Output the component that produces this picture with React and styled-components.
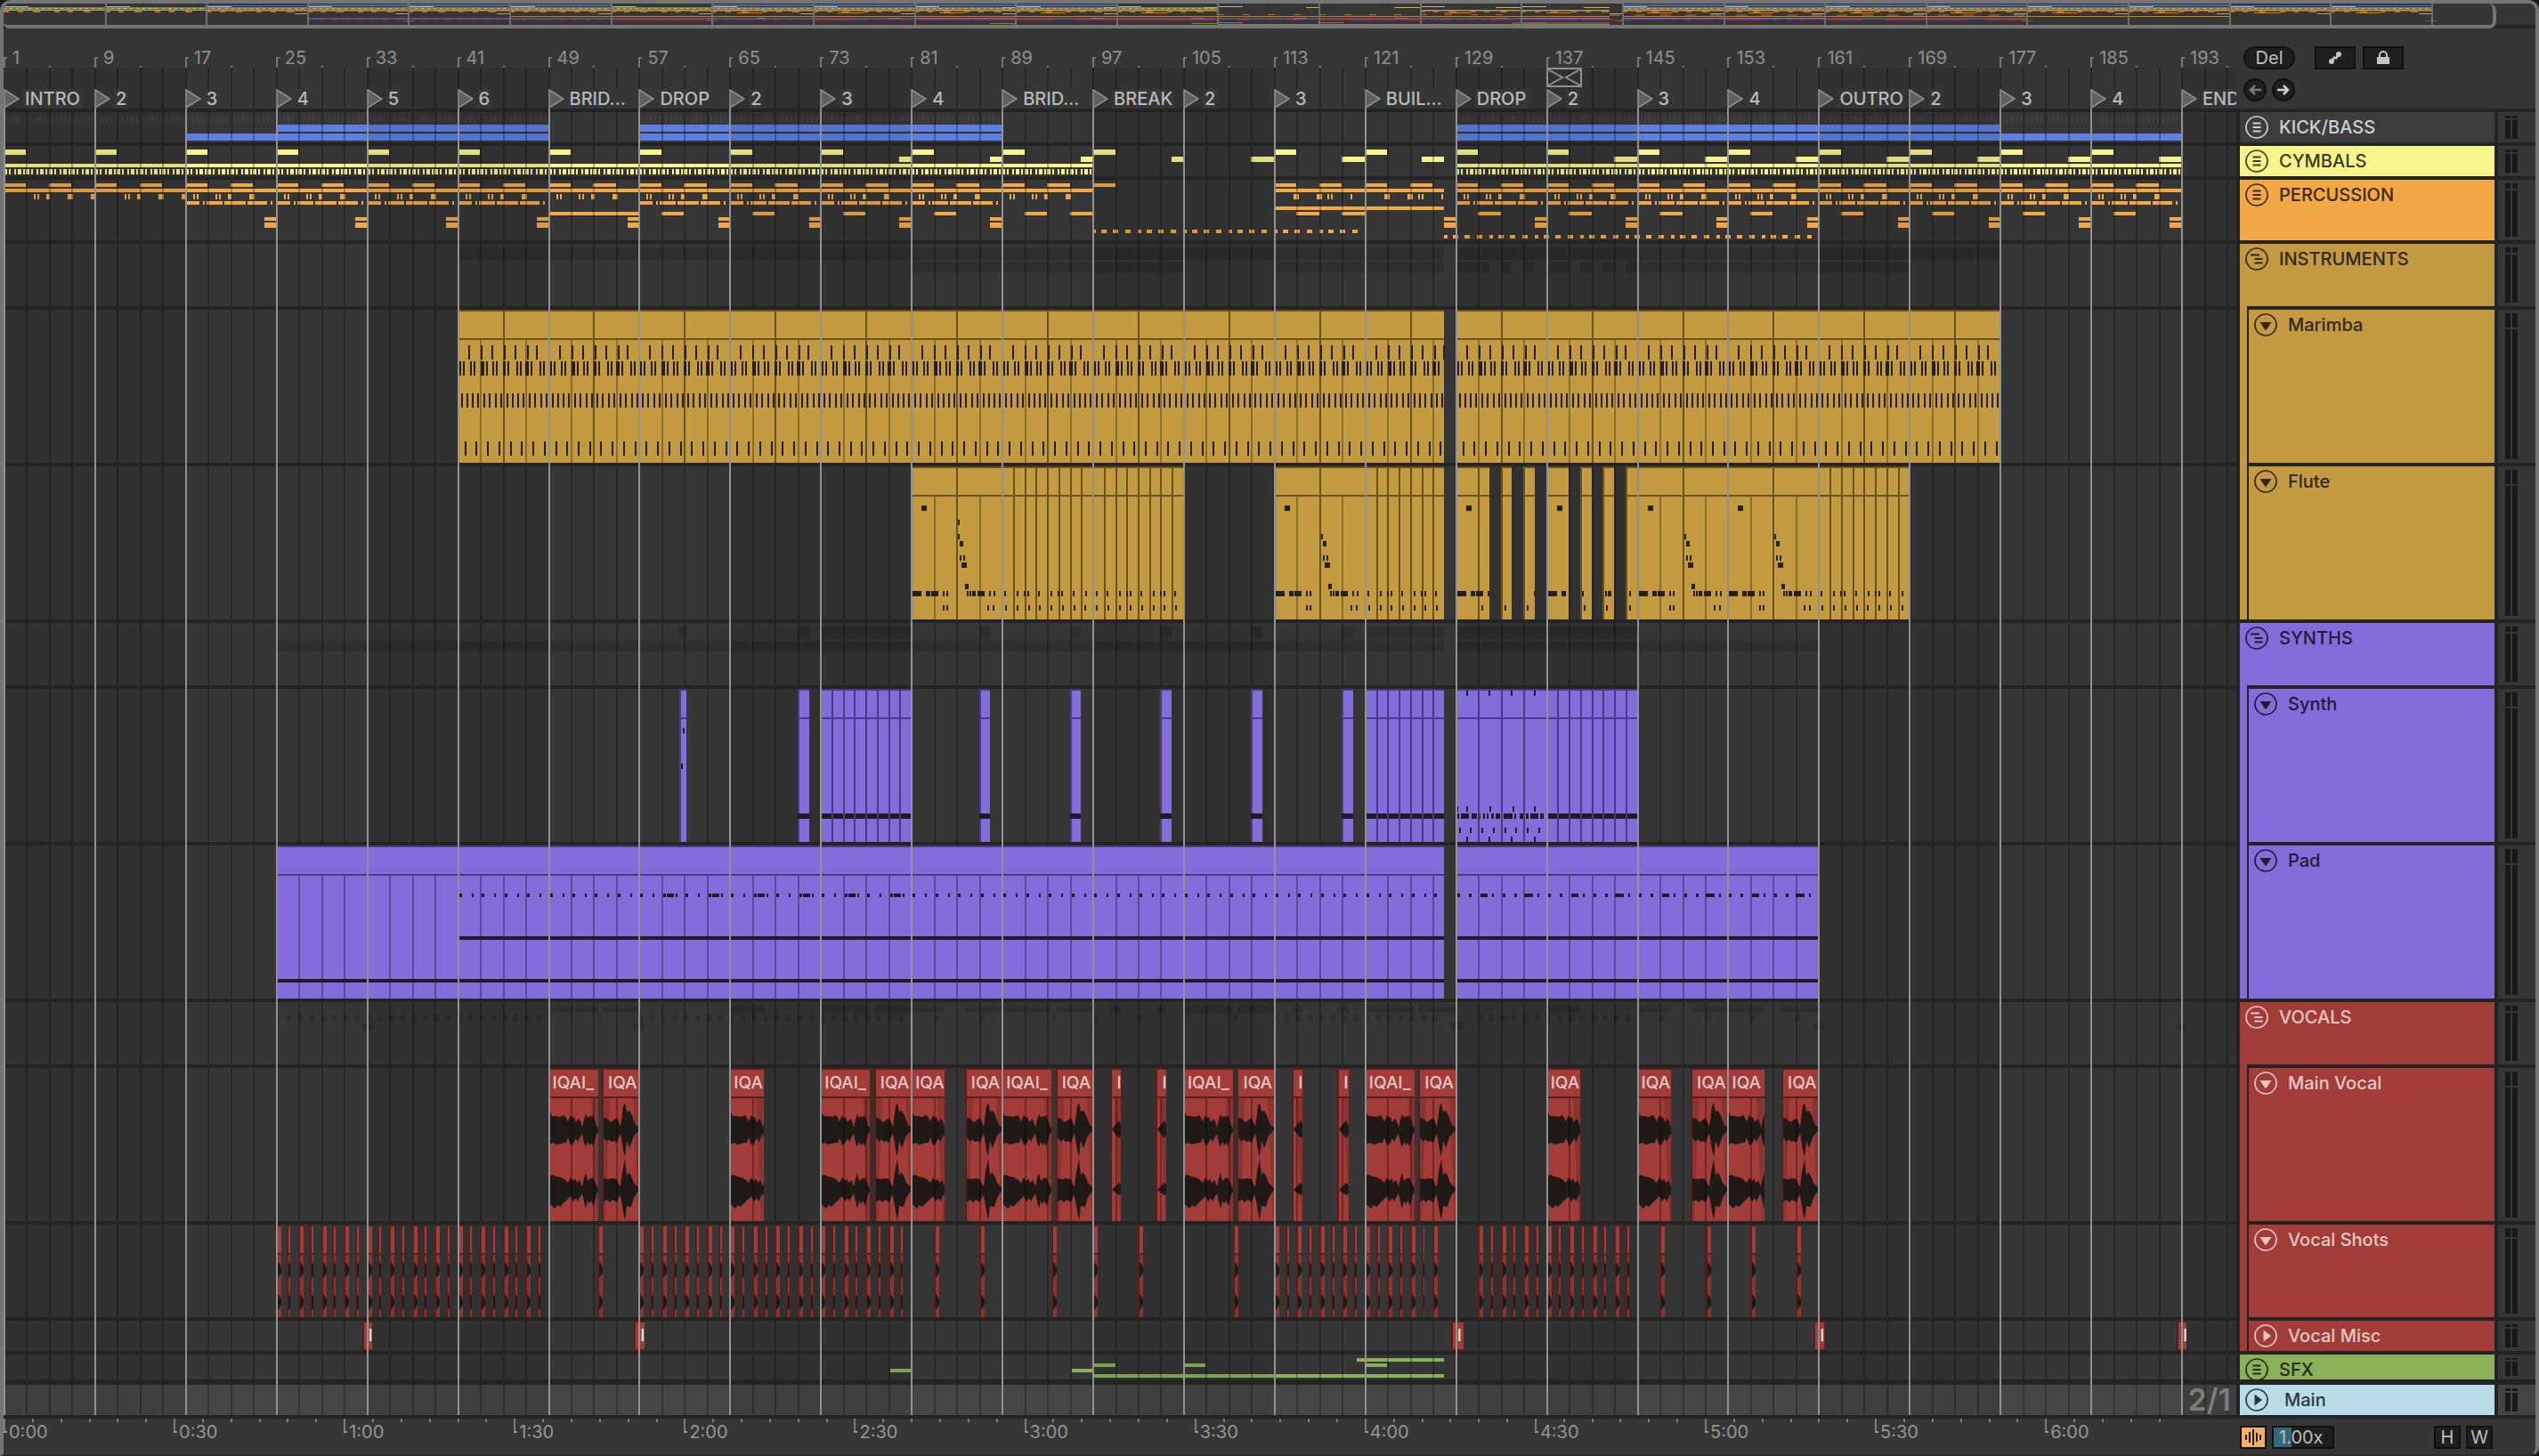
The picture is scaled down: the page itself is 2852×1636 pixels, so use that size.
import React from 'react';
import styled, { createGlobalStyle, css } from 'styled-components';

const BAR_PX = 12.74;
const BARS = 196.86;
const FONT = 'Inter, "Liberation Sans", sans-serif';

const pct = (bar) => `${(((bar - 1) / BARS) * 100).toFixed(3)}%`;
const len = (bars) => `${((bars / BARS) * 100).toFixed(3)}%`;
const at = (bar, px) => bar + px / BAR_PX;
const range = (from, to, step = 1) => {
  const out = [];
  for (let i = from; i < to; i += step) out.push(i);
  return out;
};

const color = {
  panel: '#363636',
  gap: '#242424',
  frame: '#757575',
  blue: '#5c7fe1',
  yellow: '#f7f48b',
  orange: '#f2a945',
  gold: '#c39a3f',
  purple: '#836dda',
  red: '#a13c38',
  green: '#8ab05a',
  sky: '#b8dde8',
};

const GlobalStyle = createGlobalStyle`
  * { box-sizing: border-box; }
  body {
    margin: 0;
    background: #191919;
    font-family: ${FONT};
  }
  button, input { font-family: inherit; }
`;

/* ---------- frame ---------- */

const Window = styled.main`
  min-height: 100vh;
  display: flex;
  flex-direction: column;
  background: ${color.panel};
  border: 4px solid ${color.frame};
  border-bottom: 2px solid #2c2c2c;
  border-radius: 12px 12px 10px 0;
  overflow: hidden;
  color: #b5b5b5;
  font-size: 20px;
`;

const columns = css`
  display: grid;
  grid-template-columns: minmax(0, 1fr) 290px 46px;
`;

const OverviewRow = styled.div`
  display: flex;
  height: 28px;
  background: linear-gradient(${color.panel} 24px, ${color.gap} 24px);
`;

const OverviewFrame = styled.div`
  flex: 1;
  margin-right: 44px;
  background: ${color.panel};
  border-right: 4px solid ${color.frame};
  border-bottom: 4px solid ${color.frame};
  border-radius: 0 8px 8px 6px;
`;

const Art = styled.svg`
  display: block;
  width: 100%;
  height: 100%;
  shape-rendering: crispEdges;
  font-family: ${FONT};
`;

const LayerArt = styled(Art)`
  position: absolute;
  inset: 0;
`;

const RulerRow = styled.div`
  display: grid;
  grid-template-columns: minmax(0, 1fr) 336px;
`;

const BarNumbers = styled.div`
  height: 44px;
`;

const Scrub = styled.div`
  position: relative;
  height: 46px;
  overflow: hidden;
`;

const Controls = styled.div`
  display: flex;
  flex-direction: column;
  gap: 10px;
  padding: 20px 8px 0;
`;

const ControlLine = styled.div`
  display: flex;
  gap: ${(p) => p.$gap}px;
`;

const DarkButton = styled.button`
  display: flex;
  align-items: center;
  justify-content: center;
  width: ${(p) => p.$w}px;
  height: 26px;
  padding: 0;
  margin-right: ${(p) => p.$after || 0}px;
  border: 2px solid #111;
  border-radius: ${(p) => (p.$round ? 13 : 0)}px;
  background: ${(p) => p.$bg || '#1f1f1f'};
  color: #bdbdbd;
  font-size: 20px;
  line-height: 22px;
`;

/* ---------- tracks ---------- */

const Arrangement = styled.div`
  position: relative;
`;

const TrackRow = styled.div`
  ${columns}
`;

const Lane = styled.div`
  position: relative;
  height: ${(p) => p.$h + p.$gap}px;
  border-top: ${(p) => p.$gap}px solid ${color.gap};
  background: ${(p) => (p.$light ? '#464646' : color.panel)};
  overflow: hidden;
`;

const Header = styled.div`
  display: flex;
  border-left: 4px solid ${color.gap};
  background: ${color.gap};
`;

const GroupStrip = styled.div`
  width: 8px;
  margin-right: 2px;
  background: ${(p) => p.$color};
`;

const HeaderBody = styled.div`
  flex: 1;
  display: flex;
  align-items: flex-start;
  gap: ${(p) => (p.$main ? 18 : 12)}px;
  height: ${(p) => p.$h}px;
  margin-top: ${(p) => p.$gap}px;
  padding: 4px 6px 0;
  overflow: hidden;
  background: ${(p) => p.$color};
  color: ${(p) => p.$ink};
`;

const FoldButton = styled.button`
  flex: none;
  width: 26px;
  height: 26px;
  padding: 0;
  border: 0;
  background: none;
  color: inherit;
`;

const TrackName = styled.span`
  font-weight: 500;
  line-height: 26px;
  white-space: nowrap;
`;

const MeterCell = styled.div`
  display: flex;
  gap: 2px;
  padding: 4px 20px 4px 8px;
  border-top: ${(p) => p.$gap}px solid ${color.gap};
  border-left: 4px solid ${color.gap};
  background: ${(p) => (p.$light ? '#444' : color.panel)};
`;

const Meter = styled.div`
  width: 6px;
  display: grid;
  grid-template-rows: 10% 1fr;
  gap: 2px;
`;

const MeterPart = styled.div`
  background: #191919;
`;

/* ---------- clips and locators ---------- */

const Clip = styled.div`
  position: absolute;
  top: 0;
  bottom: 0;
  overflow: hidden;
  background: ${(p) => p.$body || p.$color};
  border-top: 2px solid ${(p) => p.$edge};
  border-left: ${(p) => (p.$cut ? 2 : 0)}px solid ${(p) => p.$edge};
`;

const ClipTitle = styled.div`
  height: 32px;
  padding-left: 5px;
  overflow: hidden;
  border-bottom: 2px solid ${(p) => p.$edge};
  background: ${(p) => p.$color};
  color: #e6c8c6;
  font-size: 19px;
  font-weight: 500;
  line-height: 30px;
  white-space: nowrap;
`;

const MiscClip = styled(Clip)`
  border-bottom: 2px solid ${(p) => p.$edge};
  padding-left: 5px;
  color: #f1dedd;
  font-size: 19px;
  font-weight: 500;
  line-height: 30px;
`;

const LocatorLines = styled.div`
  position: absolute;
  top: 0;
  bottom: 0;
  left: 0;
  right: 336px;
  pointer-events: none;
`;

const Locator = styled.button`
  position: absolute;
  top: 24px;
  display: flex;
  align-items: center;
  gap: 4px;
  height: 22px;
  padding: 0;
  border: 0;
  background: none;
  color: #b9b9b9;
  font-size: 20px;
  font-weight: 500;
`;

const LocatorName = styled.span`
  padding: 0 2px;
  background: ${color.panel};
  line-height: 22px;
`;

const LoopBrace = styled.svg`
  position: absolute;
  top: 0;
  width: 40px;
  height: 22px;
`;

const Position = styled.span`
  position: absolute;
  right: 6px;
  top: 0;
  color: #7c7c7c;
  font-size: 34px;
  font-weight: 600;
  line-height: 34px;
`;

const Playhead = styled.span`
  position: absolute;
  left: 0;
  top: 0;
  bottom: 0;
  width: 2px;
  background: #8fd3e3;
`;

/* ---------- footer ---------- */

const Footer = styled.footer`
  flex: 1;
  display: grid;
  grid-template-columns: minmax(0, 1fr) 336px;
  border-top: 4px solid ${color.gap};
`;

const TimeRuler = styled.div`
  height: 40px;
`;

const FooterTools = styled.div`
  display: flex;
  gap: 6px;
  padding: 8px 48px 0 4px;
`;

const Zoom = styled.input`
  width: 70px;
  height: 26px;
  margin-right: auto;
  padding: 0 0 0 6px;
  border: 2px solid #111;
  background: linear-gradient(90deg, #31697a 20px, #1f1f1f 20px);
  color: #bdbdbd;
  font-size: 20px;
`;

/* ---------- data ---------- */

const locators = [
  [1, 'INTRO'], [9, '2'], [17, '3'], [25, '4'], [33, '5'], [41, '6'],
  [49, 'BRID...'], [57, 'DROP'], [65, '2'], [73, '3'], [81, '4'],
  [89, 'BRID...'], [97, 'BREAK'], [105, '2'], [113, '3'], [121, 'BUIL...'],
  [129, 'DROP'], [137, '2'], [145, '3'], [153, '4'], [161, 'OUTRO'],
  [169, '2'], [177, '3'], [185, '4'], [193, 'END'],
];

const bands = (y, h, spans) => spans.map(([a, b]) => ({ y, h, a, b }));
const hits = (y, h, starts, offsets) =>
  starts.flatMap((s) =>
    offsets.map(([from, to]) => ({ y, h, a: at(s, from), w: to - from }))
  );
const blocks = (from, to, size, step = 8) =>
  range(from, to, step).map((b) => [b, b + size]);

const drumRuns = [[1, 49], [57, 89], [129, 193]];
const longRuns = [[1, 97], [129, 193]];
const hatStarts = longRuns.flatMap(([a, b]) => range(a, b, 2));

const kickFaint = hits(4, 8, drumRuns.flatMap(([a, b]) => range(a, b, 4)),
  [[4, 5], [8, 10], [12, 16], [18, 20], [24, 26], [30, 32], [36, 38], [40, 44], [46, 48]]);
const kickClips = [
  ...bands(14, 8, [[25, 49], [57, 89], [129, 177]]),
  ...bands(24, 8, [[17, 49], [57, 89], [129, 193]]),
];

const cymbalClips = [
  ...bands(4, 6, [...blocks(1, 98, 2), ...blocks(113, 193, 2)]),
  ...bands(12, 6, [
    [80, 81], [88, 89], [96, 97], [104, 105], [111, 113], [119, 121], [126, 128],
    [143, 145], [151, 153], [159, 161], [167, 169], [175, 177], [183, 185], [191, 193],
  ]),
  ...bands(20, 4, longRuns),
  ...hits(26, 6, hatStarts, [[0, 4], [6, 8], [12, 14], [16, 20], [22, 24]]),
];

const fills = [...range(24, 89, 8), ...range(128, 193, 8)].map((b) => [b, b + 1]);
const shaker = [[0, 4], [10, 16], [23, 29], [37, 43]];

const percClips = [
  ...bands(4, 4, [...blocks(1, 98, 2, 4), ...blocks(113, 193, 2, 4)]),
  ...bands(10, 4, [[1, 97], [113, 128], [129, 193]]),
  ...hits(16, 6, [1, 9], [[0, 2], [34, 36], [38, 40], [48, 52], [72, 78], [98, 102]]),
  ...hits(16, 6, [...range(17, 97, 8), ...range(129, 193, 8)],
    [[9, 11], [13, 15], [34, 36], [38, 40], [48, 52], [72, 78]]),
  ...hits(16, 6, [113, 121], [[0, 2], [22, 28], [48, 54], [60, 62], [64, 66], [86, 88]]),
  ...hits(24, 4, [...range(17, 49, 8), ...range(57, 89, 8), ...range(129, 193, 8)],
    [[0, 16], [20, 22], [24, 42], [44, 68], [70, 92], [96, 98]]),
  ...bands(30, 4, [[113, 128]]),
  ...bands(36, 4, [
    [49, 57], ...blocks(59, 92, 2), [95, 97], [115, 117], [119, 121], ...blocks(131, 193, 2),
  ]),
  ...bands(42, 4, fills),
  ...bands(48, 6, fills),
  ...hits(56, 4, range(97, 119, 4), shaker),
  ...hits(62, 4, range(128, 160, 4), shaker),
  ...hits(62, 4, [160], [[0, 5]]),
];

const sfxClips = [
  ...bands(4, 4, [[120.3, 128]]),
  ...bands(10, 4, [[97, 99], [105, 107], [121, 123]]),
  ...bands(16, 4, [[79.2, 81], [95.2, 97]]),
  ...bands(22, 4, [[97, 128]]),
];

const marimbaSpans = [[41, 128], [129, 177]];
const fluteSpans = [
  [81, 105], [113, 128], [129, 132], [133, 134], [135, 136],
  [137, 139], [140, 141], [142, 143], [144, 169],
];
const synthSpans = [
  [60.6, 61.2], [71, 72], [73, 81], [87, 88], [95, 96], [103, 104],
  [111, 112], [119, 120], [121, 128], [129, 145],
];
const padSpans = [[25, 128], [129, 161]];

const inside = (spans) => (n) =>
  spans.some(([a, b]) => n.a >= a - 0.01 && n.a + (n.w || 0) / BAR_PX <= b + 0.1);

const marimbaNotes = [
  ...hits(40, 16, range(41, 177, 8),
    [12, 26, 38, 52, 64, 78, 88].map((x) => [x, x + 2])),
  ...hits(58, 16, range(41, 177, 8), [
    [2, 4], [6, 8], [14, 16], [18, 20], [26, 30], [32, 34], [39, 41], [43, 45],
    [51, 54], [56, 58], [66, 68], [70, 72], [76, 80], [82, 84], [92, 94], [96, 98],
  ]),
  ...hits(94, 16, range(41, 177, 1), [[4, 6], [10, 12]]),
  ...hits(148, 16, range(41, 177, 1), [[8, 10]]),
].filter(inside(marimbaSpans));

const fluteCascade = [85, 117, 149, 157];
const fluteNotes = [
  ...hits(44, 6, [81, 113, 129, 137, 145, 153], [[12, 18]]),
  ...hits(60, 6, [85], [[2, 4]]),
  ...hits(76, 6, fluteCascade, [[2, 4]]),
  ...hits(84, 6, fluteCascade, [[4, 8]]),
  ...hits(100, 6, fluteCascade, [[4, 6], [8, 10]]),
  ...hits(108, 6, fluteCascade, [[6, 12]]),
  ...hits(132, 6, fluteCascade, [[10, 14]]),
  ...hits(140, 6, [81, 113, 129, 137, 145, 153], [
    [1, 12], [17, 22], [23, 31], [36, 38], [40, 42], [63, 65], [66, 68],
    [69, 73], [75, 83], [88, 90], [93, 95],
  ]),
  ...hits(140, 6, [...range(89, 105, 3), ...range(121, 128, 3), ...range(161, 169, 3)],
    [[3, 5], [17, 19], [25, 27], [29, 31]]),
  ...hits(156, 6, [81, 113, 145, 153], [[36, 38], [40, 42], [86, 88], [92, 94]]),
  ...hits(156, 6, [
    ...range(89, 105), ...range(121, 128), 131, 133, 135, 140, 142, 144, ...range(161, 169),
  ], [[4, 6]]),
].filter(inside(fluteSpans));

const synthNotes = [
  ...bands(140, 6, synthSpans.slice(1, -1)),
  ...bands(140, 6, [[137, 145]]),
  ...hits(140, 6, [129], [
    [2, 4], [6, 15], [18, 24], [26, 28], [31, 33], [35, 37], [40, 43], [45, 50],
    [54, 64], [66, 68], [72, 77], [79, 82], [84, 93], [95, 99],
  ]),
  ...hits(44, 6, [60.6], [[4, 6]]),
  ...hits(84, 6, [60.6], [[2, 4]]),
  ...hits(2, 6, [129], [[12, 14], [37, 39], [62, 64], [88, 90]]),
  ...hits(132, 6, [129], [[1, 3], [12, 14], [38, 40], [64, 66], [88, 90]]),
  ...hits(156, 6, range(129, 137), [[4, 6]]),
  ...hits(166, 6, [129], [[12, 14], [37, 39], [62, 64], [88, 90]]),
];

const padNotes = [
  ...bands(102, 4, [[41, 128], [129, 161]]),
  ...bands(150, 4, padSpans),
  ...hits(54, 4, range(41, 128, 2), [[2, 5], [16, 18]]),
  ...hits(54, 4, [59, 63, 67, 71, 75, 79], [[6, 14]]),
  ...hits(54, 4, range(129, 161, 4), [[2, 5], [15, 18], [28, 36], [41, 43]]),
  ...hits(54, 4, range(133, 161, 8), [[26, 36]]),
].filter(inside(padSpans));

// kind: a = long phrase, b = answer phrase, c = breath
const vocalClips = [
  [49, 53.4, 'a', 'IQAI_'], [53.75, 57, 'b', 'IQA'], [65, 68, 'a', 'IQA'],
  [73, 77.4, 'a', 'IQAI_'], [77.75, 81, 'b', 'IQA'], [81, 84, 'a', 'IQA'],
  [85.75, 89, 'b', 'IQA'], [89, 93.4, 'a', 'IQAI_'], [93.75, 97, 'b', 'IQA'],
  [98.6, 99.5, 'c', 'I'], [102.6, 103.5, 'c', 'I'], [105, 109.4, 'a', 'IQAI_'],
  [109.75, 113, 'b', 'IQA'], [114.6, 115.5, 'c', 'I'], [118.6, 119.6, 'c', 'I'],
  [121, 125.4, 'a', 'IQAI_'], [125.75, 129, 'b', 'IQA'], [137, 140, 'a', 'IQA'],
  [145, 148, 'a', 'IQA'], [149.75, 153, 'b', 'IQA'], [153, 156.25, 'a', 'IQA'],
  [157.75, 161, 'b', 'IQA'],
];

const shots = [
  ...range(25, 49), 53.35, ...range(57, 81), 83, 87, 93.4, 97, 101, 109.4,
  ...range(113, 128), ...range(131, 145), 147, 151.1, 155, 159,
].map((b) => [b, at(b, b % 2 === 1 || b % 1 ? 6 : 4)]);

const misc = [[32.6, 33.5], [56.6, 57.5], [128.6, 129.7], [160.6, 161.5], [192.6, 193.5]];

const waves = {
  a: [
    'M0 11L2 16L4 20L8 20L13 21L18 19L20 22L22 26L25 19L27 22L29 21L31 27L34 23L36 26L38 33L40 24L42 18L44 22L46 20L48 21L50 19L52 24L54 31L56 34L56 38L54 40L52 48L50 54L48 50L46 53L44 49L42 55L40 50L38 40L36 43L33 49L31 45L28 51L25 53L22 44L20 50L17 50L14 51L9 52L6 50L3 51L0 54Z',
    'M0 81L2 87L5 86L9 88L14 89L18 91L20 93L22 95L25 89L28 93L30 90L32 95L35 92L38 99L40 90L42 84L44 93L46 91L50 89L52 93L54 98L56 101L56 105L54 108L53 112L51 121L48 115L46 119L44 115L42 124L40 116L38 107L36 110L33 116L31 112L28 116L25 110L20 115L16 119L13 122L10 120L7 124L3 120L0 119Z',
  ],
  b: [
    'M0 22L4 23L8 27L12 24L15 22L17 27L19 32L20 25L22 9L24 5L26 15L29 14L32 19L34 25L36 30L39 32L41 35L38 38L34 42L32 48L29 56L26 48L24 66L22 58L20 45L19 40L17 44L15 50L12 48L9 49L6 46L4 49L0 44Z',
    'M0 90L5 91L10 90L15 91L17 97L19 99L21 83L24 68L26 87L28 83L31 87L34 95L38 99L41 102L37 107L34 112L31 122L26 121L24 137L22 127L20 115L18 108L15 117L10 114L7 117L4 114L0 116Z',
  ],
  c: ['M0 35L4 30L8 25L10 29L12 33L12 38L10 42L8 45L4 40Z', 'M0 103L4 99L8 95L10 97L12 100L12 106L8 109L4 106Z'],
  shot: ['M0 8L3 12L5 17L3 22L0 26Z', 'M0 44L3 48L5 53L3 58L0 62Z'],
};

const edge = { gold: '#6a521f', purple: '#4a3c82', red: '#5a1f1d' };

/* ---------- drawing parts ---------- */

const zones = range(1, 197, 32);

const Grid = ({ children }) => (
  <LayerArt aria-hidden="true">
    {children}
    {zones.map((b) => (
      <rect key={b} x={pct(b)} width={len(16)} height="100%" fill="#000" opacity="0.09" />
    ))}
    {range(3, 198, 2).map((b) => (
      <rect key={b} x={pct(b)} width="2" height="100%" fill="#000" opacity="0.27" />
    ))}
  </LayerArt>
);

const Marks = ({ items, fill, opacity }) => (
  <g fill={fill} opacity={opacity}>
    {items.map((n, i) => (
      <rect key={i} x={pct(n.a)} y={n.y} width={n.w || len(n.b - n.a)} height={n.h} />
    ))}
  </g>
);

const GroupArt = ({ clips, fill, faint }) => (
  <Grid>
    {faint && <Marks items={faint} fill="#3f3f3f" />}
    {clips && <Marks items={clips} fill={fill} />}
  </Grid>
);

const Shadows = ({ items }) => (
  <LayerArt aria-hidden="true">
    <Marks items={items} fill="#000" opacity="0.14" />
  </LayerArt>
);

const Seams = ({ bars, y = 2, fill, opacity }) => (
  <g fill={fill} opacity={opacity}>
    {bars.map((b) => (
      <rect key={b} x={pct(b)} y={y} width="2" height="100%" />
    ))}
  </g>
);

const ClipBlock = ({ span, tone, cut, title, body, children }) => (
  <Clip
    $color={color[tone]}
    $body={body}
    $edge={edge[tone]}
    $cut={cut}
    style={{ left: pct(span[0]), width: len(span[1] - span[0]) }}
  >
    <ClipTitle $color={color[tone]} $edge={edge[tone]}>{title}</ClipTitle>
    {children}
  </Clip>
);

const MarimbaLane = () => (
  <>
    <Grid />
    {marimbaSpans.map((s) => <ClipBlock key={s[0]} span={s} tone="gold" />)}
    <LayerArt aria-hidden="true">
      <Seams bars={[...range(43, 128, 4), ...range(131, 177, 4)]} y={34} fill="#8b6d2d" />
      <Seams bars={[...range(45, 128, 4), ...range(133, 177, 4)]} fill={edge.gold} />
      <Marks items={marimbaNotes} fill="#241f17" />
    </LayerArt>
  </>
);

const FluteLane = () => (
  <>
    <Grid />
    {fluteSpans.map((s) => (
      <ClipBlock key={s[0]} span={s} tone="gold" cut={[133, 135, 140, 142, 144].includes(s[0])} />
    ))}
    <LayerArt aria-hidden="true">
      <Seams bars={[83, 87, 115, 119, 147, 151, 155, 159]} y={34} fill="#8b6d2d" />
      <Seams
        bars={[85, 117, 131, 145, 149, 153, 157, 161, ...range(90, 105), ...range(122, 128), ...range(162, 169)]}
        fill={edge.gold}
      />
      <Marks items={fluteNotes} fill="#241f17" />
    </LayerArt>
  </>
);

const SynthLane = () => (
  <>
    <Grid />
    {synthSpans.map((s) => (
      <ClipBlock key={s[0]} span={s} tone="purple" cut={s[1] - s[0] < 2} />
    ))}
    <LayerArt aria-hidden="true">
      <Marks items={synthNotes} fill="#1f1b26" />
      <Seams
        bars={[...range(74, 81), ...range(122, 128), 131, 133, 135, ...range(138, 145)]}
        fill={edge.purple}
      />
    </LayerArt>
  </>
);

const PadLane = () => (
  <>
    <Grid />
    {padSpans.map((s) => <ClipBlock key={s[0]} span={s} tone="purple" />)}
    <LayerArt aria-hidden="true">
      <Seams bars={[...range(27, 128, 2), ...range(131, 161, 2)]} y={34} fill="#5c4b9c" />
      <Marks items={padNotes} fill="#1f1b26" />
    </LayerArt>
  </>
);

const Wave = styled.svg`
  display: block;
  width: 60px;
  height: 138px;
  fill: #1f1918;
`;

const VocalLane = () => (
  <>
    <Grid />
    {vocalClips.map(([a, b, kind, title]) => {
      const w = Math.round((b - a) * BAR_PX);
      return (
        <ClipBlock key={a} span={[a, b]} tone="red" title={title} cut={kind !== 'a'}>
          <Wave aria-hidden="true">
            {kind === 'b' && <path d="M0 0H7L2 138H0Z" fill="#8a332f" />}
            <path d={`M${w - 8} 0H${w}V138H${w - 2}Z`} fill="#8a332f" />
            {waves[kind].map((d) => <path key={d} d={d} />)}
          </Wave>
        </ClipBlock>
      );
    })}
    <LayerArt aria-hidden="true">
      {vocalClips.flatMap(([a, b]) =>
        range(51, 162, 2)
          .filter((n) => n > a && n < b)
          .map((n) => <rect key={n} x={pct(n)} y="34" width="2" height="138" opacity="0.3" />)
      )}
    </LayerArt>
  </>
);

const ShotsLane = () => (
  <>
    <Grid />
    {shots.map((s) => (
      <ClipBlock key={s[0]} span={s} tone="red" body="#8a332f" cut>
        <Wave aria-hidden="true">
          {waves.shot.map((d) => <path key={d} d={d} />)}
        </Wave>
      </ClipBlock>
    ))}
  </>
);

const MiscLane = () => (
  <>
    <Grid />
    {misc.map(([a, b]) => (
      <MiscClip
        key={a}
        $color={color.red}
        $edge={edge.red}
        $cut
        style={{ left: pct(a), width: len(b - a) }}
      >
        I
      </MiscClip>
    ))}
  </>
);

const MainLane = () => (
  <>
    <Grid />
    <Playhead />
    <Position>2/1</Position>
  </>
);

const instrumentShadow = [...bands(4, 14, marimbaSpans), ...bands(20, 12, fluteSpans)];
const synthShadow = [...bands(4, 14, synthSpans), ...bands(20, 12, padSpans)];
const vocalShadow = [
  ...bands(4, 8, vocalClips),
  ...hits(14, 8, shots.map((s) => s[0]), [[0, 5]]),
  ...bands(24, 8, misc),
];

const tracks = [
  { name: 'KICK/BASS', h: 34, icon: 'group', bg: '#3d3d3d', ink: '#cfcfcf', art: <GroupArt clips={kickClips} faint={kickFaint} fill={color.blue} /> },
  { name: 'CYMBALS', h: 34, icon: 'group', bg: color.yellow, ink: '#3b3a22', art: <GroupArt clips={cymbalClips} fill={color.yellow} /> },
  { name: 'PERCUSSION', h: 68, icon: 'group', bg: color.orange, ink: '#3b2a12', art: <GroupArt clips={percClips} fill={color.orange} /> },
  { name: 'INSTRUMENTS', h: 70, icon: 'open', bg: color.gold, ink: '#302611', art: <><Grid /><Shadows items={instrumentShadow} /></> },
  { name: 'Marimba', h: 172, icon: 'down', child: true, bg: color.gold, ink: '#302611', art: <MarimbaLane /> },
  { name: 'Flute', h: 172, icon: 'down', child: true, bg: color.gold, ink: '#302611', art: <FluteLane /> },
  { name: 'SYNTHS', h: 70, icon: 'open', bg: color.purple, ink: '#211b38', art: <><Grid /><Shadows items={synthShadow} /></> },
  { name: 'Synth', h: 172, icon: 'down', child: true, bg: color.purple, ink: '#211b38', art: <SynthLane /> },
  { name: 'Pad', h: 172, icon: 'down', child: true, bg: color.purple, ink: '#211b38', art: <PadLane /> },
  { name: 'VOCALS', h: 70, icon: 'open', bg: color.red, ink: '#e6c8c6', art: <><Grid /><Shadows items={vocalShadow} /></> },
  { name: 'Main Vocal', h: 172, icon: 'down', child: true, bg: color.red, ink: '#e6c8c6', art: <VocalLane /> },
  { name: 'Vocal Shots', h: 104, icon: 'down', child: true, bg: color.red, ink: '#e6c8c6', art: <ShotsLane /> },
  { name: 'Vocal Misc', h: 34, icon: 'right', child: true, bg: color.red, ink: '#e6c8c6', art: <MiscLane /> },
  { name: 'SFX', h: 28, icon: 'group', bg: color.green, ink: '#232c17', art: <GroupArt clips={sfxClips} fill={color.green} /> },
  { name: 'Main', h: 34, gap: 6, icon: 'right', main: true, bg: color.sky, ink: '#2d373a', art: <MainLane /> },
];

const iconShapes = {
  group: <path d="M8.5 8.5h9M8.5 13h9M8.5 17.5h9" />,
  open: <path d="M6 8.5h10M10.5 13h9M10.5 17.5h9" />,
  down: <path d="M6.5 10h13l-6.500 9.500z" fill="currentColor" stroke="none" />,
  right: <path d="M10.5 6.5v13l8.500-6.500z" fill="currentColor" stroke="none" />,
};

const FoldIcon = ({ kind }) => (
  <svg width="26" height="26" fill="none" stroke="currentColor" strokeWidth="2" aria-hidden="true">
    <circle cx="13" cy="13" r="12" strokeWidth="1.700" />
    {iconShapes[kind]}
  </svg>
);

const Track = ({ name, h, gap = 4, icon, child, main, bg, ink, art }) => (
  <TrackRow>
    <Lane $h={h} $gap={gap} $light={main}>{art}</Lane>
    <Header>
      {child && <GroupStrip $color={bg} />}
      <HeaderBody $h={h} $gap={gap} $color={bg} $ink={ink} $main={main}>
        <FoldButton aria-label={`Fold ${name}`}><FoldIcon kind={icon} /></FoldButton>
        <TrackName>{name}</TrackName>
      </HeaderBody>
    </Header>
    <MeterCell $gap={gap} $light={main}>
      <Meter><MeterPart /><MeterPart /></Meter>
      <Meter><MeterPart /><MeterPart /></Meter>
    </MeterCell>
  </TrackRow>
);

const Overview = () => (
  <OverviewRow>
    <OverviewFrame>
      <Art aria-hidden="true">
        <Marks items={hits(0, 1, range(1, 193), [[0, 2], [5, 7]])} fill="#2b2b2b" />
        <Marks items={bands(1, 2, [[25, 49], [57, 89], [129, 177]])} fill="#4c62b4" />
        <Marks items={bands(2, 1, [[17, 25], [177, 193]])} fill="#4c62b4" />
        <Marks items={bands(3, 1, [...blocks(1, 98, 2), ...blocks(113, 193, 2)])} fill="#b8b679" />
        <Marks items={bands(4, 3, longRuns)} fill="#7f7c46" />
        <Marks items={hits(5, 1, longRuns.flatMap(([a, b]) => range(a, b, 0.5)), [[0, 3]])} fill="#b9b66b" />
        <Marks items={bands(4, 1, [[80, 81], [88, 89], [96, 97], [104, 105], [111, 113], [119, 121], [126, 128]])} fill="#b9b66b" />
        <Marks items={bands(7, 1, [[1, 97], [113, 128], [129, 193]])} fill="#c98d3a" />
        <Marks items={bands(8, 1, [[17, 97], [113, 128], [129, 193]])} fill="#8c5a2b" />
        <Marks items={hits(8, 2, [...range(1, 97, 4), ...range(113, 193, 4)], [[0, 6], [14, 20], [30, 38]])} fill="#b8702b" />
        <Marks items={bands(10, 1, [...blocks(59, 92, 2), ...blocks(115, 190, 2)])} fill="#b98235" />
        <Marks items={bands(11, 1, fills)} fill="#d9963f" />
        <Marks items={hits(12, 1, range(97, 121, 2), [[0, 8]])} fill="#a8702f" />
        <Marks items={hits(12, 2, range(128, 161, 2), [[0, 12]])} fill="#7c5526" />
        <Marks items={bands(14, 1, marimbaSpans)} fill="#a88437" />
        <Marks items={bands(16, 2, padSpans)} fill="#5b4b92" />
        <Marks items={bands(16, 1, synthSpans)} fill="#7f69d6" />
        <Marks items={bands(18, 1, vocalClips)} fill="#8f3632" />
        <Marks items={hits(18, 2, shots.map((s) => s[0]), [[0, 5]])} fill="#6b2c2a" />
        <Marks items={bands(19, 1, misc)} fill="#a13c38" />
        <Marks items={bands(21, 3, [[120.3, 128]])} fill="#50663a" />
        <Marks items={bands(21, 1, [[97, 99], [105, 107], [121, 123]])} fill="#6f8f49" />
        <Marks items={bands(22, 1, [[79, 81], [95, 97]])} fill="#6f8f49" />
        <Marks items={bands(23, 1, [[97, 128]])} fill="#6f8f49" />
        <Seams bars={range(9, 194, 8)} y={0} fill="#6e6e6e" />
      </Art>
    </OverviewFrame>
  </OverviewRow>
);

const Ruler = () => (
  <RulerRow>
    <div>
      <BarNumbers>
        <Art>
          {range(1, 194, 8).map((b) => (
            <g key={b} fill="#8f8f8f">
              <g fill="#757575">
                <rect x={pct(b)} y="32" width="2" height="12" />
                <rect x={pct(b)} y="32" width="4" height="2" />
                <rect x={pct(b + 4)} y="42" width="2" height="2" />
              </g>
              <text x={pct(b)} dx="10" y="40" fontSize="20">{b}</text>
            </g>
          ))}
        </Art>
      </BarNumbers>
      <Scrub>
        <Grid />
        <LoopBrace style={{ left: pct(137) }} fill="none" stroke="#919191" strokeWidth="2" aria-hidden="true">
          <rect x="1" y="1" width="38" height="20" />
          <path d="M2 2L18 11L2 20M38 2L22 11L38 20" />
        </LoopBrace>
        {locators.map(([bar, name]) => (
          <Locator key={bar} style={{ left: pct(bar) }}>
            <svg width="18" height="22" aria-hidden="true">
              <path d="M1 1L17 11L1 21Z" fill="#606060" stroke="#919191" strokeWidth="1.500" />
            </svg>
            <LocatorName>{name}</LocatorName>
          </Locator>
        ))}
      </Scrub>
    </div>
    <Controls>
      <ControlLine $gap={8}>
        <DarkButton $w={58} $round $after={14}>Del</DarkButton>
        <DarkButton $w={46} aria-label="Automation mode">
          <svg width="16" height="16" fill="#c4c4c4" aria-hidden="true">
            <circle cx="12" cy="4" r="3" />
            <circle cx="4" cy="12" r="3" />
            <path d="M4 12L7 7.500L9 8.500L12 4" fill="none" stroke="#c4c4c4" strokeWidth="2.500" />
          </svg>
        </DarkButton>
        <DarkButton $w={46} aria-label="Lock envelopes">
          <svg width="16" height="16" aria-hidden="true">
            <rect x="1" y="7" width="14" height="8" fill="#c4c4c4" />
            <path d="M4 8V5a4 4 0 0 1 8 0V8" fill="none" stroke="#c4c4c4" strokeWidth="2" />
          </svg>
        </DarkButton>
      </ControlLine>
      <ControlLine $gap={6}>
        <DarkButton $w={26} $round aria-label="Previous locator">
          <svg width="16" height="16" fill="none" stroke="#7a7a7a" strokeWidth="2.500" aria-hidden="true">
            <path d="M15 8H3M8 3L3 8L8 13" />
          </svg>
        </DarkButton>
        <DarkButton $w={26} $round aria-label="Next locator">
          <svg width="16" height="16" fill="none" stroke="#d0d0d0" strokeWidth="2.500" aria-hidden="true">
            <path d="M1 8H13M8 3L13 8L8 13" />
          </svg>
        </DarkButton>
      </ControlLine>
    </Controls>
  </RulerRow>
);

const clock = (s) => `${Math.floor(s / 60)}:${String(s % 60).padStart(2, '0')}`;

export const App = () => {
  return (
    <>
      <GlobalStyle />
      <Window>
        <Overview />
        <Ruler />
        <Arrangement>
          {tracks.map((t) => <Track key={t.name} {...t} />)}
          <LocatorLines>
            <Art aria-hidden="true">
              {locators.map(([bar]) => (
                <rect key={bar} x={pct(bar)} width="2" height="100%" fill="#919191" />
              ))}
            </Art>
          </LocatorLines>
        </Arrangement>
        <Footer>
          <TimeRuler>
            <Art>
              <g fill="#7a7a7a">
                {range(0, 385, 5).map((s) => (
                  <rect key={s} x={pct(1 + s / 2)} width="2" height={s % 30 ? 4 : 16} />
                ))}
              </g>
              {range(0, 361, 30).map((s) => (
                <g key={s} fill="#959595">
                  <rect x={pct(1 + s / 2)} y="14" width="4" height="2" />
                  <text x={pct(1 + s / 2)} dx="6" y="22" fontSize="20">{clock(s)}</text>
                </g>
              ))}
            </Art>
          </TimeRuler>
          <FooterTools>
            <DarkButton $w={30} $bg="#f6b063" aria-label="Waveform zoom">
              <svg width="20" height="20" stroke="#1c1c1c" strokeWidth="2" aria-hidden="true">
                <path d="M2 7v6M6 4v12M10 1v18M14 5v10M18 7v6" />
              </svg>
            </DarkButton>
            <Zoom aria-label="Zoom" defaultValue="1.00x" />
            <DarkButton $w={30}>H</DarkButton>
            <DarkButton $w={30}>W</DarkButton>
          </FooterTools>
        </Footer>
      </Window>
    </>
  );
};

export default App;
